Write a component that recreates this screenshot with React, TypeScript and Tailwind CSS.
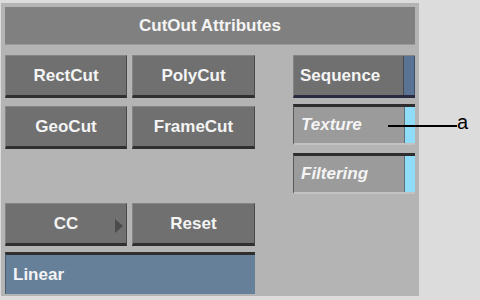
import React from "react";

const font = "font-['Liberation_Sans',Arial,sans-serif]";

const Button = ({ label, className = "", children }: { label: string; className?: string; children?: React.ReactNode }) => (
  <div
    className={`relative h-[43px] flex items-center justify-center bg-[#707070] border-t border-l border-[#858585] border-b-[3px] border-b-[#303030] border-r border-r-[#4a4a4a] text-[17px] font-bold text-[#f4f4f4] ${className}`}
  >
    {label}
    {children}
  </div>
);

const Field = ({ label }: { label: string }) => (
  <div className="flex h-[41px] w-[122px] bg-[#9b9b9b] border-t-[3px] border-t-[#2e2e2e] border-l border-l-[#5a5a5a] border-b-2 border-b-[#c2c2c2]">
    <div className="flex-1 flex items-center pl-[7px] text-[17px] font-bold italic text-[#f4f4f4]">{label}</div>
    <div className="w-[11px] bg-[#8fdcf9] border-l border-l-[#5f6f78]" />
  </div>
);

export default function App() {
  return (
    <div className={`w-[480px] h-[300px] bg-[#dcdcdc] pl-[1px] pt-[3px] ${font}`}>
      <div className="w-[418px] h-[293px] bg-[#b4b4b4] px-[4px] pt-[4px]">
        <div className="h-[38px] bg-[#808080] border-b border-[#9a9a9a] flex items-center justify-center text-[17px] font-bold text-[#f4f4f4]">
          CutOut Attributes
        </div>

        <div className="flex justify-between mt-[10px]">
          {/* left side */}
          <div className="w-[250px] flex flex-col">
            <div className="grid grid-cols-[122px_123px] gap-x-[5px] gap-y-[8px]">
              <Button label="RectCut" />
              <Button label="PolyCut" />
              <Button label="GeoCut" />
              <Button label="FrameCut" />
            </div>
            <div className="grid grid-cols-[122px_123px] gap-x-[5px] mt-[54px]">
              <Button label="CC">
                <svg className="absolute right-[2px] top-[15px]" width="10" height="14" viewBox="0 0 10 14">
                  <path d="M1 0 L9 7 L1 14 Z" fill="#4b4b4b" />
                </svg>
              </Button>
              <Button label="Reset" />
            </div>
            <div className="mt-[6px] h-[42px] bg-[#66809a] border-t-[3px] border-t-[#2e2e2e] border-l border-l-[#4a5a6a] flex items-center pl-[7px] text-[17px] font-bold text-[#f4f4f4]">
              Linear
            </div>
          </div>

          {/* right side */}
          <div className="w-[122px] flex flex-col gap-[6px]">
            <div className="flex h-[43px] bg-[#707070] border-t border-l border-[#858585] border-b-[3px] border-b-[#2a2a40]">
              <div className="flex-1 flex items-center pl-[6px] text-[17px] font-bold text-[#f4f4f4] border-r border-r-[#4a4a4a]">
                Sequence
              </div>
              <div className="w-[11px] bg-[#5a7294] border-r border-r-[#3e4f68]" />
            </div>
            <div className="flex flex-col gap-[8px]">
              <Field label="Texture" />
              <Field label="Filtering" />
            </div>
          </div>
        </div>
      </div>

      {/* callout */}
      <div className="absolute left-[388px] top-[125px] w-[69px] h-[2px] bg-black" />
      <div className="absolute left-[457px] top-[112px] text-[20px] leading-none text-black font-['Liberation_Sans',Arial,sans-serif]">
        a
      </div>
    </div>
  );
}
